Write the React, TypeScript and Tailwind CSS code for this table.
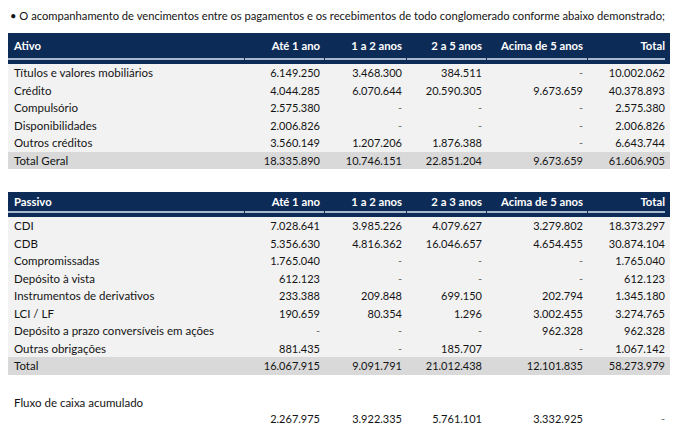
import React from "react";

type Row = { label: string; v: string[] };

const ativoRows: Row[] = [
  { label: "Títulos e valores mobiliários", v: ["6.149.250", "3.468.300", "384.511", "-", "10.002.062"] },
  { label: "Crédito", v: ["4.044.285", "6.070.644", "20.590.305", "9.673.659", "40.378.893"] },
  { label: "Compulsório", v: ["2.575.380", "-", "-", "-", "2.575.380"] },
  { label: "Disponibilidades", v: ["2.006.826", "-", "-", "-", "2.006.826"] },
  { label: "Outros créditos", v: ["3.560.149", "1.207.206", "1.876.388", "-", "6.643.744"] },
];
const ativoTotal: Row = { label: "Total Geral", v: ["18.335.890", "10.746.151", "22.851.204", "9.673.659", "61.606.905"] };

const passivoRows: Row[] = [
  { label: "CDI", v: ["7.028.641", "3.985.226", "4.079.627", "3.279.802", "18.373.297"] },
  { label: "CDB", v: ["5.356.630", "4.816.362", "16.046.657", "4.654.455", "30.874.104"] },
  { label: "Compromissadas", v: ["1.765.040", "-", "-", "-", "1.765.040"] },
  { label: "Depósito à vista", v: ["612.123", "-", "-", "-", "612.123"] },
  { label: "Instrumentos de derivativos", v: ["233.388", "209.848", "699.150", "202.794", "1.345.180"] },
  { label: "LCI / LF", v: ["190.659", "80.354", "1.296", "3.002.455", "3.274.765"] },
  { label: "Depósito a prazo conversíveis em ações", v: ["-", "-", "-", "962.328", "962.328"] },
  { label: "Outras obrigações", v: ["881.435", "-", "185.707", "-", "1.067.142"] },
];
const passivoTotal: Row = { label: "Total", v: ["16.067.915", "9.091.791", "21.012.438", "12.101.835", "58.273.979"] };

const grid = "grid grid-cols-[237px_80px_82px_80px_101px_82px]";

function Header({ first, cols, tall }: { first: string; cols: string[]; tall: boolean }) {
  return (
    <div className="bg-[#0d2b57]">
      <div className={`${grid} ${tall ? "h-[25px]" : "h-[19px]"} items-center font-bold text-white text-[11.3px]`}>
        <div className="pl-[6px]">{first}</div>
        {cols.map((c) => (
          <div key={c} className="pr-[5px] text-right">{c}</div>
        ))}
      </div>
      <div className={`${grid} h-[2px]`}>
        <div className="bg-[#a9b8cc] mr-[1px]" />
        <div className="bg-[#a9b8cc] mr-[1px]" />
        <div className="bg-[#a9b8cc] mr-[1px]" />
        <div className="bg-[#a9b8cc] mr-[1px]" />
        <div className="bg-[#a9b8cc] mr-[1px]" />
        <div className="bg-[#a9b8cc] mr-[5px]" />
      </div>
      <div className="h-[4px]" />
    </div>
  );
}

function DataRow({ r, total }: { r: Row; total?: boolean }) {
  return (
    <div className={`${grid} h-[17.5px] items-center ${total ? "bg-[#d9d9d9]" : ""}`}>
      <div className="pl-[6px] whitespace-nowrap text-[11.5px]">{r.label}</div>
      {r.v.map((x, i) => (
        <div key={i} className={`pr-[5px] text-right ${x === "-" ? "text-[#6b6b6b]" : ""}`}>{x}</div>
      ))}
    </div>
  );
}

export default function App() {
  return (
    <div
      className="w-[680px] h-[429px] bg-white text-[#141414] text-[11px] leading-none"
      style={{ fontFamily: "Lato, 'Open Sans', sans-serif" }}
    >
      <div className="pl-[10px] pt-[10px] h-[33px] text-[11.2px] whitespace-nowrap">
        • O acompanhamento de vencimentos entre os pagamentos e os recebimentos de todo conglomerado conforme abaixo demonstrado;
      </div>
      <div className="ml-[8px] w-[662px]">
        <Header first="Ativo" cols={["Até 1 ano", "1 a 2 anos", "2 a 5 anos", "Acima de 5 anos", "Total"]} tall />
        <div className="bg-[#f2f2f2]">
          {ativoRows.map((r) => (
            <DataRow key={r.label} r={r} />
          ))}
          <DataRow r={ativoTotal} total />
        </div>
        <div className="h-[23px]" />
        <Header first="Passivo" cols={["Até 1 ano", "1 a 2 anos", "2 a 3 anos", "Acima de 5 anos", "Total"]} tall={false} />
        <div className="bg-[#f2f2f2]">
          {passivoRows.map((r) => (
            <DataRow key={r.label} r={r} />
          ))}
          <DataRow r={passivoTotal} total />
        </div>
        <div className={`${grid} mt-[22px]`}>
          <div className="pl-[6px] whitespace-nowrap text-[11.5px]">Fluxo de caixa acumulado</div>
          {["2.267.975", "3.922.335", "5.761.101", "3.332.925", "-"].map((x, i) => (
            <div key={i} className={`pr-[5px] pt-[16px] text-right ${x === "-" ? "text-[#6b6b6b]" : ""}`}>{x}</div>
          ))}
        </div>
      </div>
    </div>
  );
}
